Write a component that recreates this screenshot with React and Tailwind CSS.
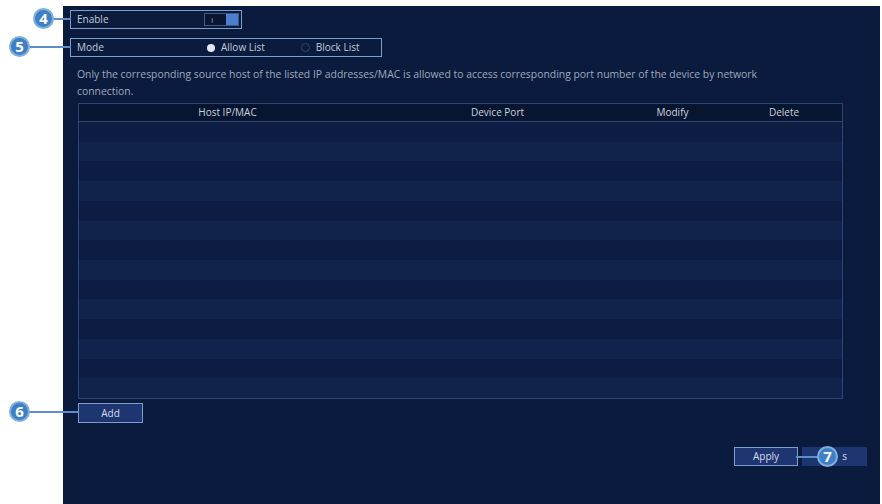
import React from "react";

const rows = Array.from({ length: 14 }, (_, i) => i);

function Callout({ n, className }) {
  return (
    <div
      className={`absolute flex items-center justify-center w-[21px] h-[21px] rounded-full bg-[#3f7fc4] border-2 border-[#7fb0e0] text-white text-[15px] font-bold ${className}`}
    >
      {n}
    </div>
  );
}

export default function App() {
  return (
    <div
      className="relative w-[882px] h-[504px] bg-white pt-[6px] pl-[63px] pr-[2px] flex overflow-hidden"
      style={{ fontFamily: "'Open Sans', 'Noto Sans', sans-serif" }}
    >
      {/* main panel */}
      <div className="flex-1 bg-[#0b1b3e] flex flex-col pt-[4px] pl-[7px] pr-[35px] text-[10px] text-[#c3cbd8]">
        {/* Enable */}
        <div className="w-[172px] h-[19px] border border-[#7d9cc9] flex items-center pl-[6px] justify-between pr-[2px]">
          <span>Enable</span>
          <div className="flex items-center h-[13px] w-[35px] bg-[#0a1530] border border-[#3c5a8c]">
            <span className="text-[8px] text-[#8fa2c2] ml-[6px] flex-1">I</span>
            <div className="w-[12px] h-[11px] bg-[#4b7fd0]" />
          </div>
        </div>

        {/* Mode */}
        <div className="mt-[9px] w-[312px] h-[19px] border border-[#7d9cc9] flex items-center pl-[6px]">
          <span className="w-[130px]">Mode</span>
          <div className="flex items-center gap-[6px]">
            <div className="w-[8px] h-[8px] rounded-full bg-[#e3e8f0]" />
            <span>Allow List</span>
          </div>
          <div className="flex items-center gap-[6px] ml-[36px]">
            <div className="w-[9px] h-[9px] rounded-full border border-[#2f4770]" />
            <span>Block List</span>
          </div>
        </div>

        {/* description */}
        <p className="mt-[9px] pl-[7px] text-[10.4px] leading-[17px] text-[#9ea9bd]">
          Only the corresponding source host of the listed IP addresses/MAC is allowed to access
          corresponding port number of the device by network
          <br />
          connection.
        </p>

        {/* table */}
        <div className="mt-[3px] ml-[8px] w-[765px] h-[296px] border border-[#2c4673] flex flex-col">
          <div className="h-[18px] bg-[#081530] border-b border-[#2c4673] flex items-center text-[#c9d1de]">
            <span className="w-[297px] text-center">Host IP/MAC</span>
            <span className="w-[243px] text-center">Device Port</span>
            <span className="w-[107px] text-center">Modify</span>
            <span className="flex-1 text-center">Delete</span>
          </div>
          <div className="flex-1 flex flex-col">
            {rows.map((i) => (
              <div
                key={i}
                className={`flex-1 ${i % 2 === 0 ? "bg-[#0c1c42]" : "bg-[#0f234d]"}`}
              />
            ))}
          </div>
        </div>

        {/* Add */}
        <div className="mt-[4px] ml-[8px] w-[65px] h-[20px] bg-[#1d3570] border border-[#7d9cc9] flex items-center justify-center text-[#d6dcea]">
          Add
        </div>

        {/* bottom buttons */}
        <div className="mt-[24px] flex justify-end gap-[4px] mr-[-22px]">
          <div className="w-[64px] h-[19px] bg-[#1d3570] border border-[#7d9cc9] flex items-center justify-center text-[#d6dcea]">
            Apply
          </div>
          <div className="w-[65px] h-[19px] bg-[#1d3570] flex items-center justify-end pr-[20px] text-[#d6dcea]">
            s
          </div>
        </div>
      </div>

      {/* callouts */}
      <div className="absolute left-[52px] top-[18px] w-[19px] h-[2px] bg-[#5d8ec7]" />
      <Callout n="4" className="left-[33px] top-[8px]" />
      <div className="absolute left-[28px] top-[46px] w-[43px] h-[2px] bg-[#5d8ec7]" />
      <Callout n="5" className="left-[9px] top-[36px]" />
      <div className="absolute left-[28px] top-[411px] w-[51px] h-[2px] bg-[#5d8ec7]" />
      <Callout n="6" className="left-[9px] top-[401px]" />
      <div className="absolute left-[796px] top-[456px] w-[24px] h-[2px] bg-[#5d8ec7]" />
      <Callout n="7" className="left-[817px] top-[446px]" />
    </div>
  );
}
